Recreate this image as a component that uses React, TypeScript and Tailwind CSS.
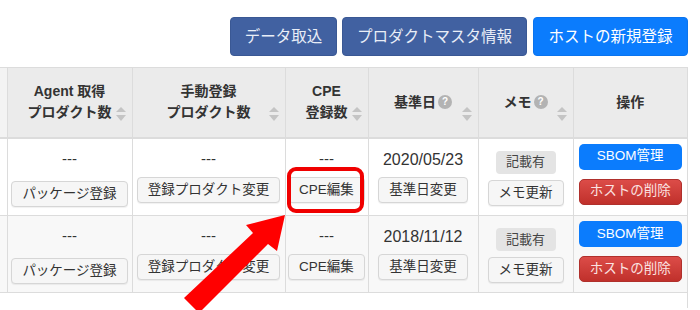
import React from "react";

type Row = {
  date: string;
};

const rows: Row[] = [{ date: "2020/05/23" }, { date: "2018/11/12" }];

/* ---------------- small pieces ---------------- */

function SortIcon() {
  return (
    <svg
      width="10"
      height="14"
      viewBox="0 0 10 14"
      className="absolute right-[6px] top-[39px]"
    >
      <polygon points="0,5 5,0 10,5" fill="#c4c4c4" />
      <polygon points="0,8 10,8 5,14" fill="#c4c4c4" />
    </svg>
  );
}

function HelpIcon() {
  return (
    <span className="ml-[2px] inline-flex h-[14px] w-[14px] items-center justify-center rounded-full bg-[#b3b3b3] text-[10px] font-bold leading-none text-white">
      ?
    </span>
  );
}

function LightButton({ children, className = "" }: { children: React.ReactNode; className?: string }) {
  return (
    <button
      type="button"
      className={`inline-flex h-[26px] items-center justify-center rounded-[4px] border border-[#d6d6d6] bg-[#f6f6f6] px-[10px] text-[13.5px] leading-none text-[#333] shadow-[0_1px_1px_rgba(0,0,0,0.06)] ${className}`}
    >
      {children}
    </button>
  );
}

/* ---------------- Page ---------------- */

export default function App() {
  return (
    <div className="relative h-[310px] w-[700px] overflow-hidden bg-white font-['Liberation_Sans','Noto_Sans_CJK_JP',sans-serif] text-[#333]">
      {/* Top actions */}
      <div className="flex w-[688px] justify-end gap-[5px] pt-[17px]">
        <button
          type="button"
          className="h-[39px] w-[107px] rounded-[4px] border border-[#3a5894] bg-[#4161a1] text-[15.5px] text-[#e9eef7]"
        >
          データ取込
        </button>
        <button
          type="button"
          className="h-[39px] w-[185px] rounded-[4px] border border-[#3a5894] bg-[#4161a1] text-[15.5px] text-[#e9eef7]"
        >
          プロダクトマスタ情報
        </button>
        <button
          type="button"
          className="ml-[1px] h-[39px] w-[155px] rounded-[4px] border border-[#0b74ee] bg-[#0b7cfd] text-[15.5px] text-white"
        >
          ホストの新規登録
        </button>
      </div>

      {/* Host table */}
      <div className="mt-[11px] w-[688px] border-r border-[#dcdcdc] pb-[15px]">
        <table className="w-[687px] table-fixed border-collapse">
          <colgroup>
            <col className="w-[7px]" />
            <col className="w-[125px]" />
            <col className="w-[153px]" />
            <col className="w-[83px]" />
            <col className="w-[110px]" />
            <col className="w-[95px]" />
            <col className="w-[114px]" />
          </colgroup>
          <thead>
            <tr className="h-[70px] border-t border-b-2 border-[#dcdcdc] text-[14px] font-bold leading-[21px] text-[#333]">
              <th className="bg-[#f3f3f3]" />
              <th className="relative border-l border-[#dcdcdc] bg-[#ebebeb] align-middle">
                <div>Agent 取得</div>
                <div>プロダクト数</div>
                <SortIcon />
              </th>
              <th className="relative border-l border-[#dcdcdc] bg-[#ebebeb] align-middle">
                <div>手動登録</div>
                <div>プロダクト数</div>
                <SortIcon />
              </th>
              <th className="relative border-l border-[#dcdcdc] bg-[#ebebeb] align-middle">
                <div>CPE</div>
                <div>登録数</div>
                <SortIcon />
              </th>
              <th className="relative border-l border-[#dcdcdc] bg-[#ebebeb] align-middle">
                <div className="flex items-center justify-center">
                  基準日
                  <HelpIcon />
                </div>
                <SortIcon />
              </th>
              <th className="relative border-l border-[#dcdcdc] bg-[#ebebeb] align-middle">
                <div className="flex items-center justify-center">
                  メモ
                  <HelpIcon />
                </div>
                <SortIcon />
              </th>
              <th className="border-l border-[#dcdcdc] bg-[#ebebeb] align-middle">操作</th>
            </tr>
          </thead>
          <tbody>
            {rows.map((row, i) => (
              <tr
                key={row.date}
                className={`border-b border-[#dcdcdc] text-center ${
                  i === 0 ? "h-[78px] bg-white" : "h-[77px] bg-[#f8f8f8]"
                }`}
              >
                <td />
                <td className="border-l border-[#dcdcdc] pt-[10px] align-top">
                  <div className="text-[15px] leading-[20px]">---</div>
                  <LightButton className="mt-[12px]">パッケージ登録</LightButton>
                </td>
                <td className="border-l border-[#dcdcdc] pt-[10px] align-top">
                  <div className="text-[15px] leading-[20px]">---</div>
                  <LightButton className="mt-[8px]">登録プロダクト変更</LightButton>
                </td>
                <td className="border-l border-[#dcdcdc] pt-[10px] align-top">
                  <div className="text-[15px] leading-[20px]">---</div>
                  <LightButton className="mt-[8px]">CPE編集</LightButton>
                </td>
                <td className="border-l border-[#dcdcdc] pt-[11px] align-top">
                  <div className="text-[16px] leading-[20px]">{row.date}</div>
                  <LightButton className="mt-[7px]">基準日変更</LightButton>
                </td>
                <td className="border-l border-[#dcdcdc] pt-[12px] align-top">
                  <div className="mx-auto flex h-[23px] w-[60px] items-center justify-center rounded-[4px] bg-[#e4e4e4] text-[13px] text-[#444]">
                    記載有
                  </div>
                  <LightButton className="mt-[6px] h-[25px]">メモ更新</LightButton>
                </td>
                <td className="border-l border-[#dcdcdc] pt-[5px] align-top">
                  <button
                    type="button"
                    className="mx-auto flex h-[26px] w-[103px] items-center justify-center rounded-[5px] bg-[#0b7cfd] text-[13.5px] text-white"
                  >
                    SBOM管理
                  </button>
                  <button
                    type="button"
                    className="mx-auto mt-[9px] flex h-[26px] w-[103px] items-center justify-center rounded-[5px] border border-[#b0302c] bg-gradient-to-b from-[#dc4c48] to-[#c0302b] text-[13.5px] text-[#fbe3e2]"
                  >
                    ホストの削除
                  </button>
                </td>
              </tr>
            ))}
          </tbody>
        </table>
      </div>

      {/* Annotation: red box + arrow */}
      <svg
        className="pointer-events-none absolute left-0 top-0"
        width="700"
        height="310"
        viewBox="0 0 700 310"
      >
        <rect x="289" y="169" width="73" height="42" rx="7" fill="none" stroke="#f00000" strokeWidth="4" />
        <polygon
          points="285,215 277,251 268,244 199,313 184,298 253,233 246,225"
          fill="#ff0000"
        />
      </svg>
    </div>
  );
}
